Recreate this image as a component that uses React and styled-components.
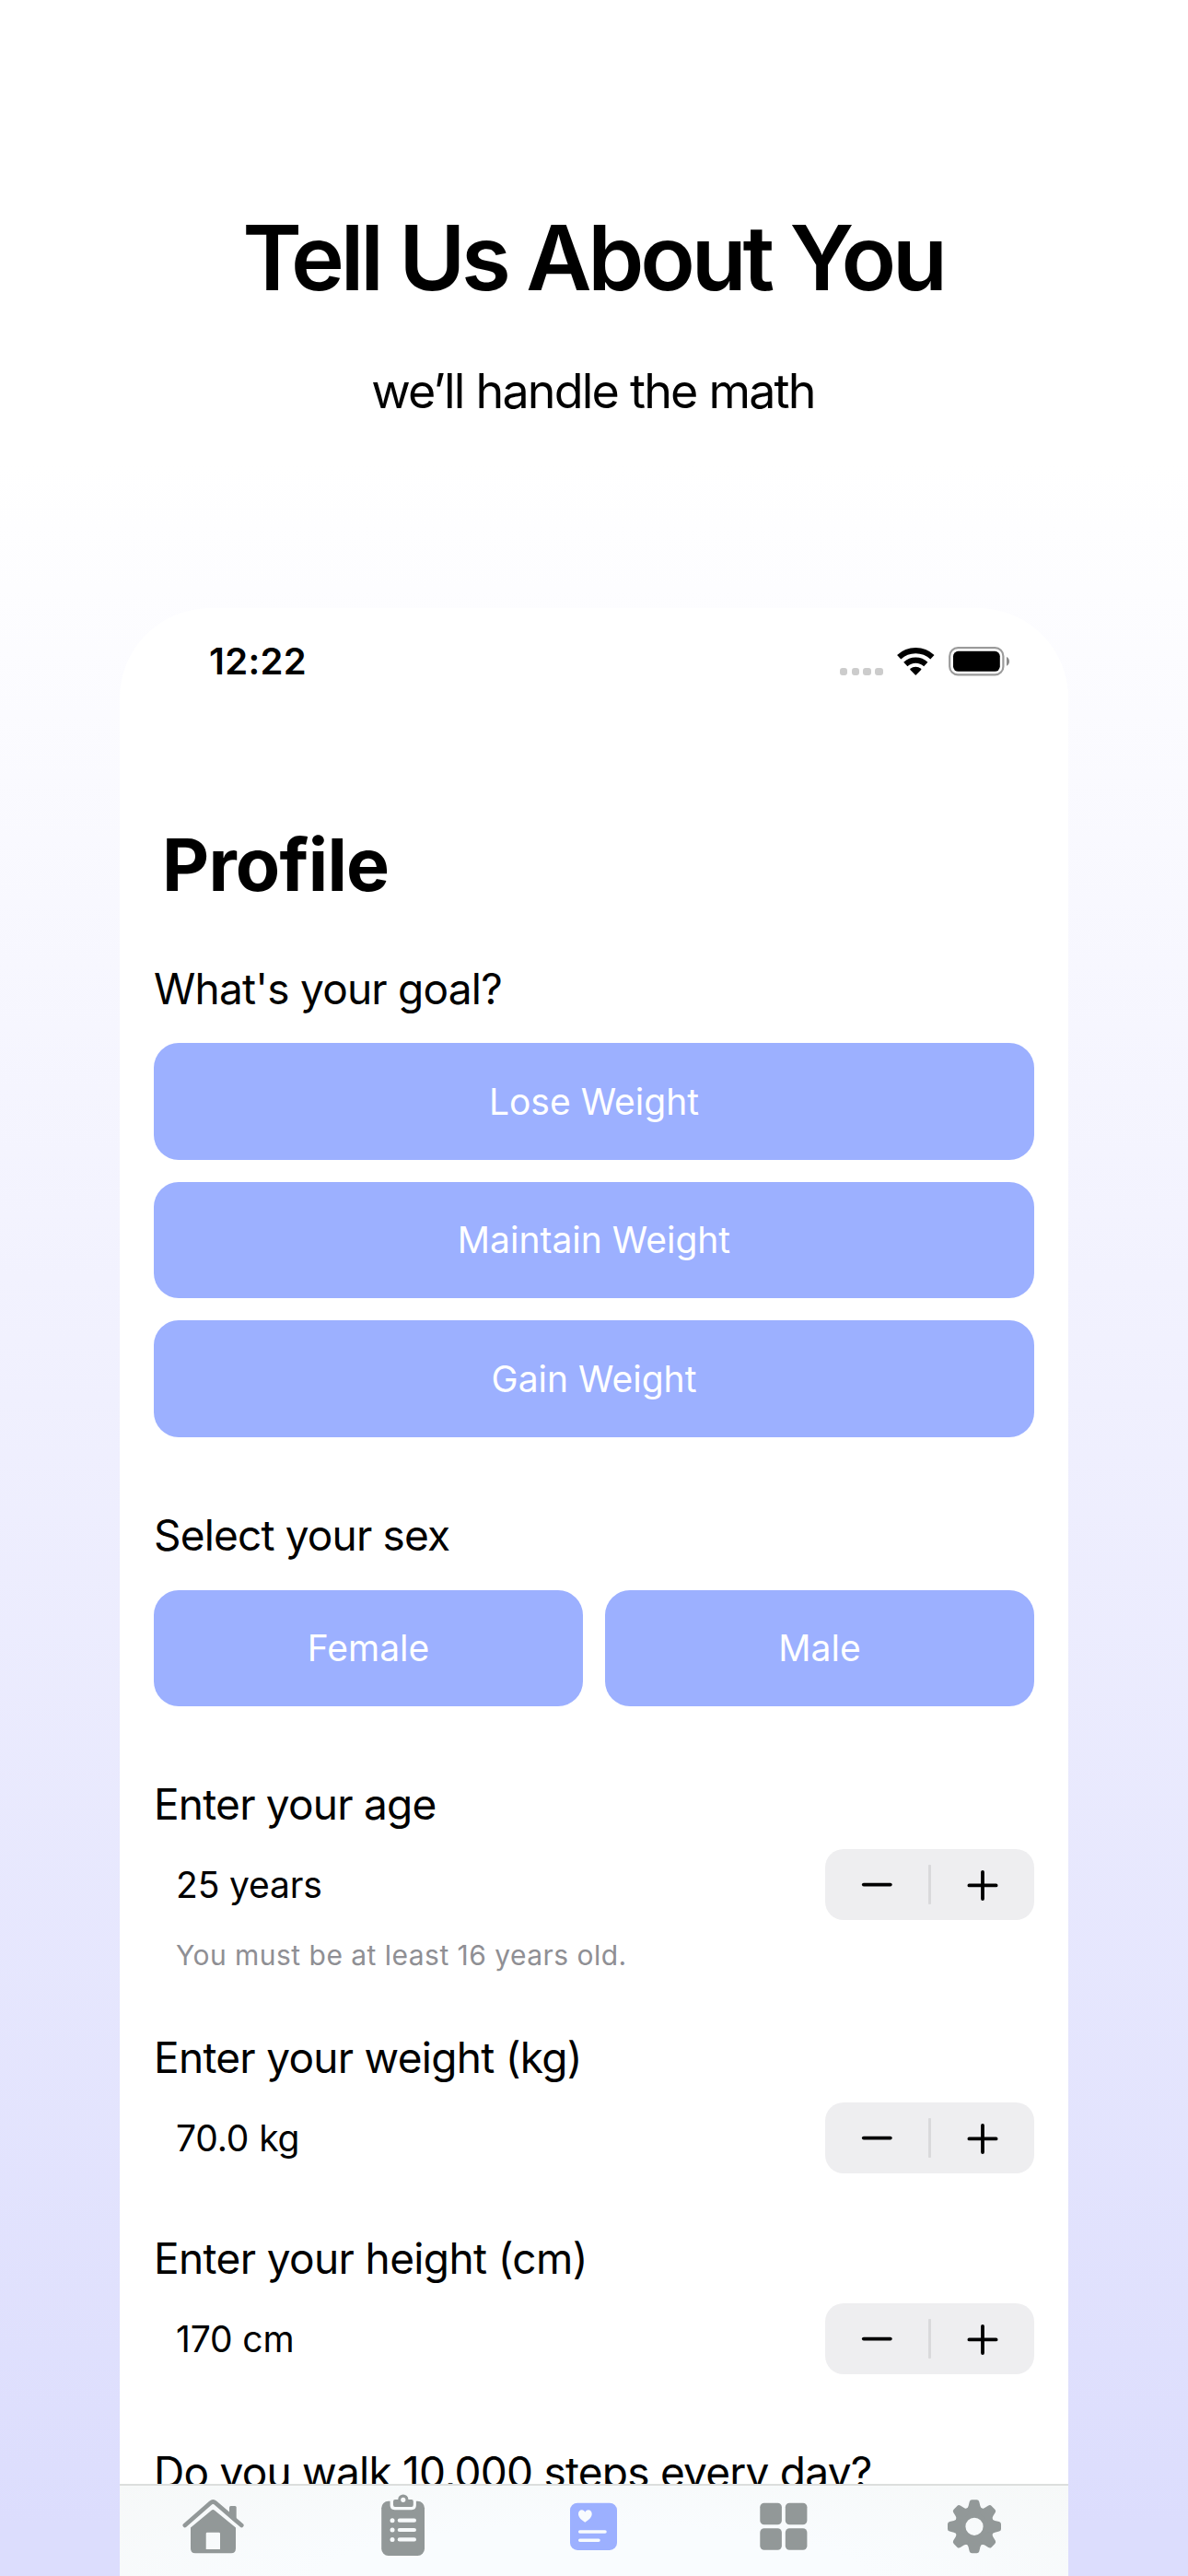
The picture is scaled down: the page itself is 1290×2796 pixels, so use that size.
import React, { useState } from "react";
import styled, { createGlobalStyle } from "styled-components";

const GOALS = ["Lose Weight", "Maintain Weight", "Gain Weight"];
const SEXES = ["Female", "Male"];
const TEETH = [0, 45, 90, 135, 180, 225, 270, 315];

function WifiIcon() {
  return (
    <svg width="41" height="31" viewBox="0 0 41 31" fill="none">
      <path d="M2.2 10.3A26.6 26.6 0 0 1 38.4 10.3" stroke="#000" strokeWidth="6.2" />
      <path d="M9.3 18A16.1 16.1 0 0 1 31.3 18" stroke="#000" strokeWidth="6.2" />
      <path
        d="M20.3 29L14.9 23.4A8.4 8.4 0 0 1 25.7 23.4Z"
        fill="#000"
        stroke="#000"
        strokeWidth="1.4"
        strokeLinejoin="round"
      />
    </svg>
  );
}

function BatteryIcon() {
  return (
    <svg width="67" height="32" viewBox="0 0 67 32">
      <rect x="1.2" y="1.2" width="58.2" height="29.2" rx="9" fill="none" stroke="#9b9b9b" strokeWidth="2.2" />
      <rect x="5" y="4.8" width="50.8" height="22" rx="5.5" fill="#000" />
      <path d="M63 11C67 12.5 67 19.3 63 20.8Z" fill="#8b8b8b" />
    </svg>
  );
}

function HomeIcon() {
  return (
    <TabIcon viewBox="0 0 72 72">
      <path d="M52 28V17.5Q52 16 53.5 16H58.2Q59.7 16 59.7 17.5V35Z" />
      <path
        d="M3.8 37L31.8 12.6Q34.3 10.4 36.8 12.6L65.3 37"
        fill="none"
        stroke="currentColor"
        strokeWidth="4.6"
        strokeLinecap="round"
      />
      <path
        fillRule="evenodd"
        d="M32.6 20.8Q34.3 19.3 36 20.8L59 39.6V62.3Q59 67.3 54 67.3H15Q10 67.3 10 62.3V39.6ZM28 44.7Q26.7 44.7 26.7 46V63H42V46Q42 44.7 40.7 44.7Z"
      />
    </TabIcon>
  );
}

function PlanIcon() {
  return (
    <TabIcon viewBox="0 0 72 72">
      <rect x="11.2" y="10.7" width="46.8" height="59.3" rx="7.5" />
      <path
        d="M22.2 9V15.3Q22.2 18.6 25.5 18.6H44Q47.3 18.6 47.3 15.3V9Z"
        fill="#f7fafb"
        stroke="#f7fafb"
        strokeWidth="3.2"
      />
      <path
        fillRule="evenodd"
        d="M26 9H29.2A5.6 5.6 0 0 1 40.4 9H43.8Q45.8 9 45.8 11V14.8Q45.8 17 43.8 17H26Q24 17 24 14.8V11Q24 9 26 9ZM34.8 6.7A2.6 2.6 0 1 0 34.8 11.9A2.6 2.6 0 1 0 34.8 6.7Z"
      />
      {[31.7, 42, 52.4].map((y) => (
        <g key={y}>
          <circle cx="23" cy={y} r="2.5" fill="#f7fafb" />
          <path d={`M30.8 ${y}H46.9`} stroke="#f7fafb" strokeWidth="4.2" strokeLinecap="round" />
        </g>
      ))}
    </TabIcon>
  );
}

function ProfileIcon() {
  return (
    <TabIcon viewBox="0 0 72 72">
      <rect x="10" y="12.7" width="51" height="51.2" rx="8" />
      <path
        d="M26.3 33.8C22.5 31.4 19 28.4 19 24.6C19 22 20.7 20.3 22.8 20.3C24.4 20.3 25.7 21.2 26.3 22.7C26.9 21.2 28.2 20.3 29.8 20.3C32 20.3 33.7 22 33.7 24.6C33.7 28.4 30.1 31.4 26.3 33.8Z"
        fill="#f8fbfd"
      />
      <path d="M20.7 44H48M20.7 53.3H41" stroke="#f8fbfd" strokeWidth="3.5" strokeLinecap="round" />
    </TabIcon>
  );
}

function GridIcon() {
  return (
    <TabIcon viewBox="0 0 72 72">
      <rect x="10.3" y="12.7" width="23.6" height="23.5" rx="4.5" />
      <rect x="37.8" y="12.7" width="23.6" height="23.5" rx="4.5" />
      <rect x="10.3" y="40.2" width="23.6" height="23.5" rx="4.5" />
      <rect x="37.8" y="40.2" width="23.6" height="23.5" rx="4.5" />
    </TabIcon>
  );
}

function GearIcon() {
  return (
    <TabIcon viewBox="0 0 72 72">
      <circle cx="37" cy="38.3" r="15.4" fill="none" stroke="currentColor" strokeWidth="11.6" />
      {TEETH.map((angle) => (
        <path
          key={angle}
          transform={`rotate(${angle} 37 38.3)`}
          d="M27.5 19.8Q30 18.6 30.6 16L31.7 11.4Q32.3 9.3 34.4 9.3H39.6Q41.7 9.3 42.3 11.4L43.4 16Q44 18.6 46.5 19.8L42 24H32Z"
        />
      ))}
    </TabIcon>
  );
}

const TABS = [
  { id: "home", Icon: HomeIcon },
  { id: "plan", Icon: PlanIcon },
  { id: "profile", Icon: ProfileIcon },
  { id: "more", Icon: GridIcon },
  { id: "settings", Icon: GearIcon },
];

function NumberField({ label, onMinus, onPlus }) {
  return (
    <FieldRow>
      <FieldValue>{label}</FieldValue>
      <Stepper>
        <StepButton onClick={onMinus} aria-label="minus">
          <svg width="36" height="36" viewBox="0 0 36 36">
            <path d="M3.8 17.6H32.8" stroke="#000" strokeWidth="3.8" strokeLinecap="round" />
          </svg>
        </StepButton>
        <StepDivider />
        <StepButton onClick={onPlus} aria-label="plus">
          <svg width="36" height="36" viewBox="0 0 36 36">
            <path d="M3.4 18.4H32.6M18 3.8V33" stroke="#000" strokeWidth="3.8" strokeLinecap="round" />
          </svg>
        </StepButton>
      </Stepper>
    </FieldRow>
  );
}

function App() {
  const [age, setAge] = useState(25);
  const [weight, setWeight] = useState(70);
  const [height, setHeight] = useState(170);
  const [tab, setTab] = useState("profile");

  return (
    <Page>
      <GlobalStyle />
      <Headline>Tell Us About You</Headline>
      <Tagline>we’ll handle the math</Tagline>

      <Phone>
        <StatusBar>
          <Time>12:22</Time>
          <StatusIcons>
            <SignalDots>
              <Dot />
              <Dot />
              <Dot />
              <Dot />
            </SignalDots>
            <WifiIcon />
            <BatteryIcon />
          </StatusIcons>
        </StatusBar>

        <Content>
          <Title>Profile</Title>

          <Section $top={59}>
            <Question $tracking={-0.78}>What's your goal?</Question>
            <GoalList>
              {GOALS.map((goal) => (
                <Choice key={goal}>{goal}</Choice>
              ))}
            </GoalList>
          </Section>

          <Section $top={78}>
            <Question $tracking={-0.83}>Select your sex</Question>
            <SexRow>
              {SEXES.map((sex) => (
                <Choice key={sex}>{sex}</Choice>
              ))}
            </SexRow>
          </Section>

          <Section $top={78}>
            <Question $tracking={-0.78}>Enter your age</Question>
            <NumberField
              label={`${age} years`}
              onMinus={() => setAge(Math.max(16, age - 1))}
              onPlus={() => setAge(age + 1)}
            />
            <Hint>You must be at least 16 years old.</Hint>
          </Section>

          <Section $top={65}>
            <Question $tracking={-0.72}>Enter your weight (kg)</Question>
            <NumberField
              label={`${weight.toFixed(1)} kg`}
              onMinus={() => setWeight(weight - 0.5)}
              onPlus={() => setWeight(weight + 0.5)}
            />
          </Section>

          <Section $top={64}>
            <Question $tracking={-0.63}>Enter your height (cm)</Question>
            <NumberField
              label={`${height} cm`}
              onMinus={() => setHeight(height - 1)}
              onPlus={() => setHeight(height + 1)}
            />
          </Section>

          <Section $top={78}>
            <Question $tracking={-0.76}>Do you walk 10,000 steps every day?</Question>
          </Section>
        </Content>

        <TabBar>
          {TABS.map(({ id, Icon }) => (
            <Tab key={id} $active={id === tab} onClick={() => setTab(id)} aria-label={id}>
              <Icon />
            </Tab>
          ))}
        </TabBar>
      </Phone>
    </Page>
  );
}

export default App;

// ================== Styled Components ==================
const GlobalStyle = createGlobalStyle`
  * {
    box-sizing: border-box;
  }

  body {
    margin: 0;
    font-family: "Inter", "Liberation Sans", sans-serif;
    color: #000;
  }

  button {
    border: none;
    padding: 0;
    background: none;
    font-family: inherit;
    cursor: pointer;
  }

  svg {
    display: block;
    flex-shrink: 0;
  }
`;

const Page = styled.div`
  display: flex;
  flex-direction: column;
  align-items: center;
  width: 1290px;
  height: 2796px;
  padding-top: 220px;
  overflow: hidden;
  background: linear-gradient(180deg, #ffffff 18%, #f1f1fe 52%, #dcddfd 98%);
`;

const Headline = styled.h1`
  margin: 0 2px 0 0;
  font-size: 98px;
  font-weight: 600;
  line-height: 120px;
  letter-spacing: -4.2px;
  white-space: nowrap;
`;

const Tagline = styled.p`
  margin: 53px 2px 0 0;
  font-size: 52px;
  line-height: 64px;
  letter-spacing: -1.8px;
`;

const Phone = styled.div`
  display: flex;
  flex-direction: column;
  flex: 1;
  width: 1030px;
  min-height: 0;
  margin-top: 203px;
  overflow: hidden;
  border-radius: 98px 98px 0 0;
  background-color: #ffffff;
`;

const StatusBar = styled.div`
  display: flex;
  align-items: center;
  justify-content: space-between;
  flex-shrink: 0;
  height: 82px;
  padding: 34px 63px 0 97px;
`;

const Time = styled.span`
  font-size: 40px;
  font-weight: 600;
  line-height: 48px;
  letter-spacing: 0.3px;
`;

const StatusIcons = styled.div`
  display: flex;
  align-items: center;
  gap: 15px;
`;

const SignalDots = styled.div`
  display: flex;
  gap: 4.2px;
  margin-top: 22px;
`;

const Dot = styled.span`
  width: 8.7px;
  height: 8.7px;
  border-radius: 3px;
  background-color: #cccccc;
`;

const Content = styled.div`
  flex: 1;
  min-height: 0;
  padding: 148px 37px 0;
  overflow: hidden;
`;

const Title = styled.h2`
  margin: 0;
  padding-left: 9px;
  font-size: 79px;
  font-weight: 700;
  line-height: 96px;
  letter-spacing: -0.8px;
`;

const Section = styled.section`
  margin-top: ${({ $top }) => $top}px;
`;

const Question = styled.h3`
  margin: 0;
  font-size: 46px;
  font-weight: 400;
  line-height: 56px;
  letter-spacing: ${({ $tracking }) => $tracking}px;
  white-space: nowrap;
`;

const GoalList = styled.div`
  display: flex;
  flex-direction: column;
  gap: 24px;
  margin-top: 31px;
`;

const SexRow = styled.div`
  display: grid;
  grid-template-columns: 1fr 1fr;
  gap: 24px;
  margin-top: 32px;
`;

const Choice = styled.button`
  height: 126.5px;
  padding-top: 1px;
  border-radius: 27px;
  background-color: #9cb0ff;
  color: #ffffff;
  font-size: 39px;
  line-height: 48px;
`;

const FieldRow = styled.div`
  display: flex;
  align-items: center;
  justify-content: space-between;
  height: 77px;
  margin-top: 21px;
  padding-left: 24px;
`;

const FieldValue = styled.span`
  font-size: 39px;
  letter-spacing: -0.15px;
`;

const Stepper = styled.div`
  display: flex;
  align-items: center;
  width: 227px;
  height: 77px;
  border-radius: 20px;
  background-color: #eeeef0;
`;

const StepButton = styled.button`
  display: flex;
  flex: 1;
  align-items: center;
  justify-content: center;
  height: 100%;
`;

const StepDivider = styled.span`
  width: 2.5px;
  height: 43px;
  border-radius: 1px;
  background-color: #d9d9db;
`;

const Hint = styled.p`
  margin: 20px 0 0;
  padding-left: 24px;
  color: #8f8f94;
  font-size: 30px;
  line-height: 36px;
  letter-spacing: 0.47px;
`;

const TabBar = styled.nav`
  display: grid;
  grid-template-columns: repeat(5, 1fr);
  flex-shrink: 0;
  height: 100px;
  padding-top: 6px;
  border-top: 2px solid #dcdedd;
  background: radial-gradient(ellipse at 50% 100%, #f9fcfe 40%, #f6f8f8 100%);
`;

const Tab = styled.button`
  display: flex;
  align-items: flex-start;
  justify-content: center;
  color: ${({ $active }) => ($active ? "#9cb0ff" : "#929898")};
`;

const TabIcon = styled.svg`
  width: 72px;
  height: 72px;
  fill: currentColor;
`;
